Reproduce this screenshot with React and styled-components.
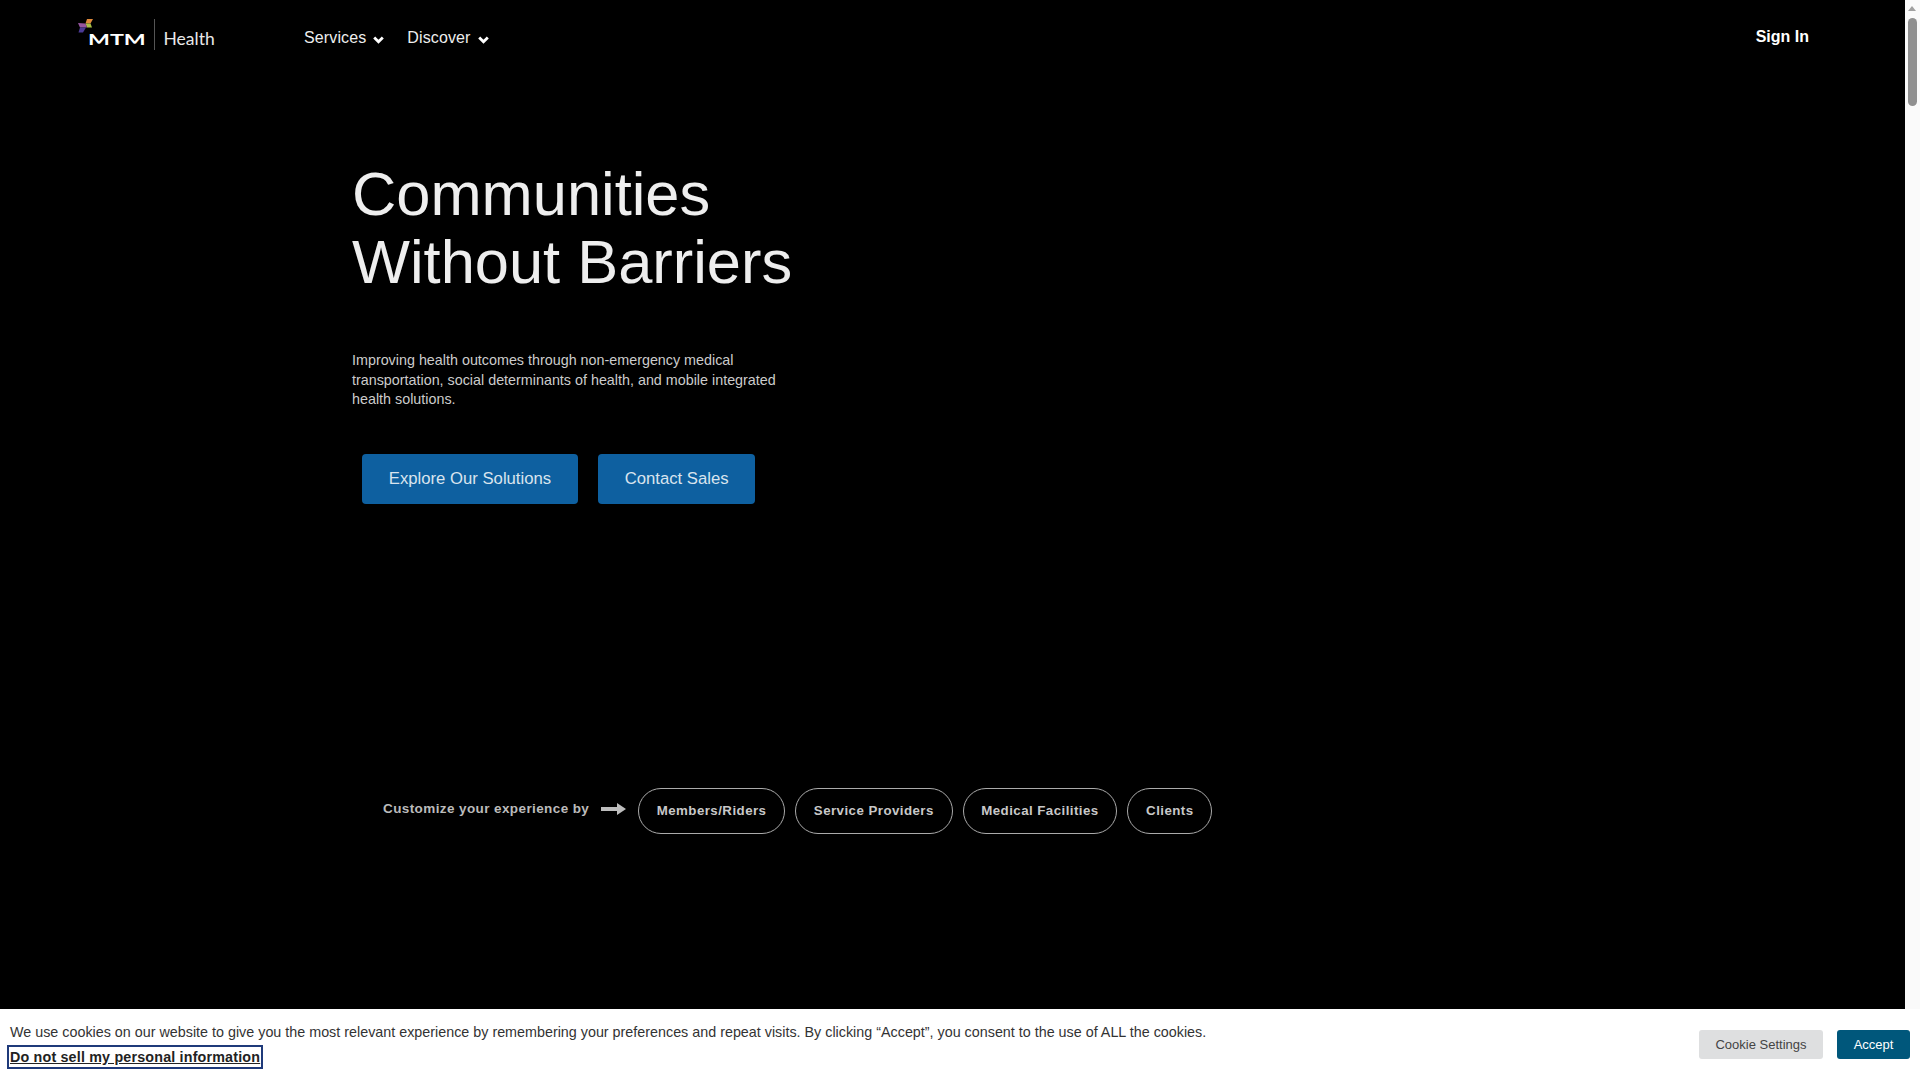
import React from "react";
import styled, { createGlobalStyle } from "styled-components";

const GlobalStyle = createGlobalStyle`
  html, body {
    margin: 0;
    height: 100%;
    overflow: hidden;
    background: #000;
  }
  * {
    box-sizing: border-box;
  }
`;

const navItems = ["Services", "Discover"];
const audiences = ["Members/Riders", "Service Providers", "Medical Facilities", "Clients"];

function LogoMark() {
  return (
    <svg width="15" height="15" viewBox="0 0 15 15">
      <polygon points="9,0 15,0 12.5,4.5 7.5,4.5" fill="#e08a3c" />
      <polygon points="7.5,4.5 12.5,4.5 14,8.5 9,8.5" fill="#a9bf45" />
      <polygon points="0,4 7.5,4.5 9,8.5 2,8.5" fill="#96559f" />
      <polygon points="2,8.5 8,8.5 5,13.5 0.5,13.5" fill="#4b3a94" />
    </svg>
  );
}

function Chevron() {
  return (
    <svg width="11" height="8" viewBox="0 0 11 8">
      <path d="M1.2 1.4 L5.5 5.7 L9.8 1.4" fill="none" stroke="#fff" strokeWidth="2.8" />
    </svg>
  );
}

function Arrow() {
  return (
    <svg width="25" height="14" viewBox="0 0 25 14">
      <path d="M0 5 H16 V1 L25 7 L16 13 V9 H0 Z" fill="#bdbdbd" />
    </svg>
  );
}

export default function App() {
  return (
    <>
      <GlobalStyle />
      <Layout>
        <Page>
          <Header>
            <Logo>
              <MarkWrap>
                <LogoMark />
              </MarkWrap>
              <MtmText>MTM</MtmText>
              <LogoDivider />
              <HealthText>Health</HealthText>
            </Logo>
            <Nav>
              {navItems.map((item) => (
                <NavItem key={item}>
                  {item}
                  <Chevron />
                </NavItem>
              ))}
            </Nav>
            <SignIn>Sign In</SignIn>
          </Header>
          <Hero>
            <Title>
              Communities
              <br />
              Without Barriers
            </Title>
            <Lead>
              Improving health outcomes through non-emergency medical
              <br />
              transportation, social determinants of health, and mobile integrated
              <br />
              health solutions.
            </Lead>
            <Actions>
              <PrimaryButton>Explore Our Solutions</PrimaryButton>
              <PrimaryButton>Contact Sales</PrimaryButton>
            </Actions>
          </Hero>
          <Customize>
            <CustomizeLabel>Customize your experience by</CustomizeLabel>
            <ArrowWrap>
              <Arrow />
            </ArrowWrap>
            <Pills>
              {audiences.map((a) => (
                <Pill key={a}>{a}</Pill>
              ))}
            </Pills>
          </Customize>
        </Page>
        <ScrollTrack>
          <ScrollUp />
          <ScrollThumb />
        </ScrollTrack>
      </Layout>
      <CookieBar>
        <CookieCopy>
          <CookieText>
            We use cookies on our website to give you the most relevant experience by remembering your
            preferences and repeat visits. By clicking “Accept”, you consent to the use of ALL the cookies.
          </CookieText>
          <CookieLink href="#">Do not sell my personal information</CookieLink>
        </CookieCopy>
        <CookieActions>
          <SettingsButton>Cookie Settings</SettingsButton>
          <AcceptButton>Accept</AcceptButton>
        </CookieActions>
      </CookieBar>
    </>
  );
}

const Layout = styled.div`
  display: flex;
  width: 100vw;
  height: 100vh;
  font-family: "Liberation Sans", Arial, sans-serif;
`;
const Page = styled.main`
  flex: 1;
  background: #000;
  color: #fff;
`;
const Header = styled.header`
  display: flex;
  align-items: flex-start;
  height: 160px;
  padding: 18px 96px 0 78px;
`;
const Logo = styled.div`
  display: flex;
  align-items: center;
  width: 226px;
  height: 31px;
  margin-top: 1px;
  position: relative;
`;
const MarkWrap = styled.span`
  position: absolute;
  left: 0;
  top: 0;
`;
const MtmText = styled.span`
  margin: 8px 0 0 9.5px;
  width: 57px;
  font-family: "Lato", sans-serif;
  font-size: 16px;
  line-height: 20px;
  font-weight: 700;
  transform: scaleX(1.45);
  transform-origin: left;
`;
const LogoDivider = styled.span`
  width: 1px;
  height: 31px;
  margin: 0 9px;
  background: #555;
`;
const HealthText = styled.span`
  margin-top: 8px;
  font-family: "Lato", sans-serif;
  font-size: 17.5px;
  line-height: 22px;
  color: #e8e8e8;
`;
const Nav = styled.nav`
  display: flex;
  gap: 23px;
  padding-top: 10px;
`;
const NavItem = styled.a`
  display: flex;
  align-items: center;
  gap: 7px;
  font-size: 16px;
  letter-spacing: 0.12px;
  line-height: 20px;
  color: #eee;
  svg {
    margin-top: 3px;
  }
`;
const SignIn = styled.a`
  margin-left: auto;
  padding-top: 9px;
  font-size: 16px;
  line-height: 20px;
  font-weight: 700;
`;
const Hero = styled.section`
  padding-left: 352px;
`;
const Title = styled.h1`
  margin: 0;
  font-size: 61.4px;
  line-height: 68px;
  font-weight: 400;
  color: #eee;
`;
const Lead = styled.p`
  margin: 55px 0 0;
  font-size: 14.33px;
  line-height: 19.5px;
  color: #ccc;
`;
const Actions = styled.div`
  display: flex;
  gap: 20px;
  margin: 44px 0 0 10px;
`;
const PrimaryButton = styled.button`
  height: 50px;
  padding: 0 26.8px;
  border: 0;
  border-radius: 4px;
  background: #0e60a0;
  color: #d9e4ee;
  font-family: inherit;
  font-size: 16.7px;
`;
const Customize = styled.section`
  display: flex;
  align-items: center;
  margin-top: 284px;
  padding-left: 383px;
`;
const CustomizeLabel = styled.span`
  width: 218px;
  font-size: 13.5px;
  font-weight: 700;
  letter-spacing: 0.4px;
  color: #bbb;
  margin-top: -5px;
`;
const ArrowWrap = styled.span`
  display: flex;
  width: 37px;
  margin-top: -4px;
`;
const Pills = styled.div`
  display: flex;
  gap: 10px;
`;
const Pill = styled.button`
  height: 46px;
  padding: 0 17.7px;
  border: 1px solid #aaa;
  border-radius: 23px;
  background: transparent;
  color: #c8c8c8;
  font-family: inherit;
  font-size: 13.3px;
  font-weight: 700;
  letter-spacing: 0.45px;
`;
const ScrollTrack = styled.div`
  position: relative;
  width: 15px;
  background: #fafafa;
`;
const ScrollUp = styled.span`
  position: absolute;
  top: 6px;
  left: 3px;
  border-left: 4.5px solid transparent;
  border-right: 4.5px solid transparent;
  border-bottom: 5px solid #a0a0a0;
`;
const ScrollThumb = styled.span`
  position: absolute;
  top: 18px;
  left: 3px;
  width: 9px;
  height: 88px;
  border-radius: 5px;
  background: #909090;
`;
const CookieBar = styled.footer`
  position: fixed;
  left: 0;
  right: 0;
  bottom: 0;
  height: 71px;
  display: flex;
  justify-content: space-between;
  padding: 14px 10px 0;
  background: #fff;
  font-family: "Liberation Sans", Arial, sans-serif;
`;
const CookieCopy = styled.div`
  display: flex;
  flex-direction: column;
  align-items: flex-start;
`;
const CookieText = styled.span`
  font-size: 14.33px;
  line-height: 18px;
  color: #333;
`;
const CookieLink = styled.a`
  margin-top: 7px;
  font-size: 14.3px;
  letter-spacing: 0.18px;
  line-height: 18px;
  font-weight: 700;
  color: #222;
  text-decoration: underline;
  outline: 2px solid #1f3a7a;
  outline-offset: 1.5px;
`;
const CookieActions = styled.div`
  display: flex;
  gap: 14px;
  padding-top: 7px;
`;
const SettingsButton = styled.button`
  width: 124px;
  height: 29px;
  border: 0;
  border-radius: 3px;
  background: #dedfe0;
  color: #444;
  font-family: inherit;
  font-size: 13px;
`;
const AcceptButton = styled(SettingsButton)`
  width: 73px;
  background: #00577b;
  color: #fff;
`;
